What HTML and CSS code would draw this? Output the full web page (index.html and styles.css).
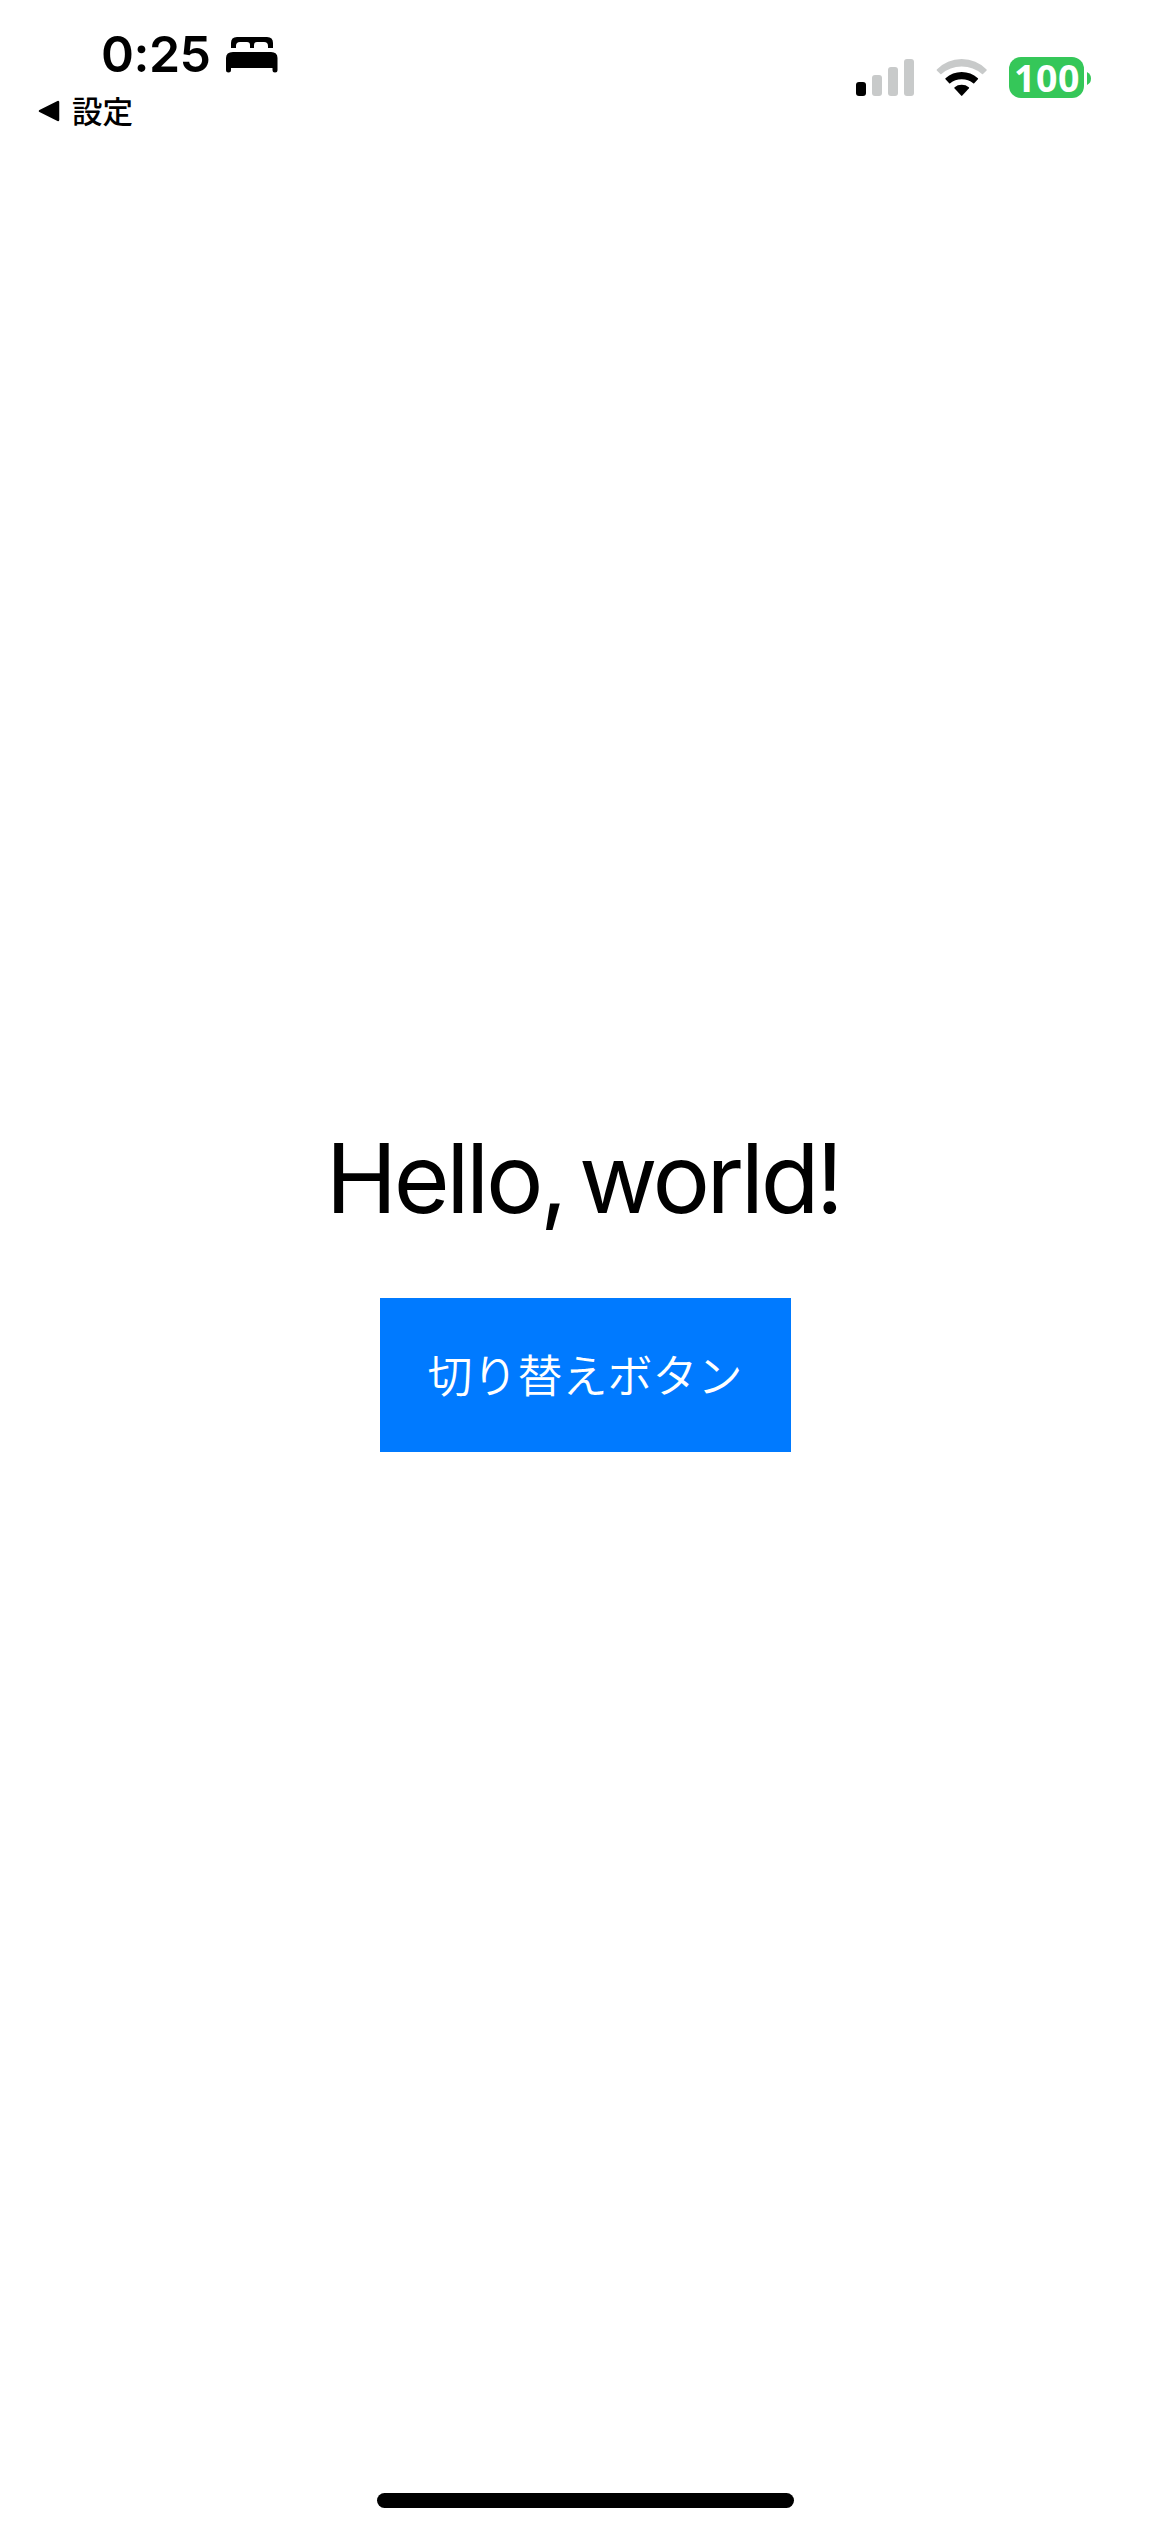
FILE: index.html
```html
<!DOCTYPE html>
<html lang="ja">
<head>
<meta charset="utf-8">
<title>Hello, world!</title>
<link rel="stylesheet" href="styles.css">
</head>
<body>
<header class="status">
  <div class="status-left">
    <div class="clock">
      <span class="time">0:25</span>
      <svg class="bed" width="52" height="36" viewBox="0 0 52 36"><path d="M5 11V6Q5 0 11 0H41Q47 0 47 6V11H42V9Q42 5 38 5H31Q28 5 28 8V11H24V8Q24 5 21 5H14Q10 5 10 9V11Z"/><path d="M0 33V21Q0 15 7 15H45Q51.500 15 51.500 21V33Q51.500 35.500 49 35.500T46.500 33V31H5V33Q5 35.500 2.500 35.500T0 33Z"/></svg>
    </div>
    <div class="back">
      <svg width="22" height="22" viewBox="0 0 22 22"><path d="M2 11 20 2V20Z" stroke="#000" stroke-width="2.500" stroke-linejoin="round"/></svg>
      <span class="back-label">設定</span>
    </div>
  </div>
  <div class="indicators">
    <svg width="58" height="42" viewBox="0 0 58 42"><rect y="25" width="10" height="14" rx="3"/><g fill="#c8caca"><rect x="16" y="18" width="10" height="21" rx="3"/><rect x="32" y="10" width="10" height="29" rx="3"/><rect x="48" y="2" width="10" height="37" rx="3"/></g></svg>
    <svg class="wifi" width="52" height="42" viewBox="0 0 52 42"><path fill="#c8caca" d="M.8 12.600Q11 2 25.700 2T50.600 12.600Q51 13 50.600 13.400L47 17Q46.500 17.500 46 17Q37.500 9.400 25.700 9.400T5.400 17Q4.900 17.500 4.400 17L.8 13.400Q.4 13 .8 12.600Z"/><path d="M9.500 21.200Q16.500 15 25.700 15T41.900 21.200Q42.400 21.700 41.900 22.200L38.200 26.200Q37.700 26.700 37.200 26.200Q32.500 22.300 25.700 22.300T14.200 26.200Q13.700 26.700 13.200 26.200L9.500 22.200Q9 21.700 9.500 21.200Z"/><path d="M18.600 30.200Q21.500 27.800 25.700 27.800T32.800 30.200Q33.400 30.700 32.800 31.400L26.300 38.600Q25.700 39.200 25.100 38.600L18.600 31.400Q18 30.700 18.600 30.200Z"/></svg>
    <div class="battery"><span class="charge">100</span></div>
    <svg class="tip" width="4" height="13" viewBox="0 0 4 13"><path fill="#35c759" d="M0 0Q4 2 4 6.500T0 13Z"/></svg>
  </div>
</header>
<main class="content">
  <h1 class="title">Hello, world!</h1>
  <button class="toggle">切り替えボタン</button>
</main>
<footer class="home"><div class="home-bar"></div></footer>
</body>
</html>
```
FILE: styles.css
```css
* { box-sizing: border-box; }
body {
  margin: 0;
  height: 2532px;
  display: flex;
  flex-direction: column;
  background: #fff;
  color: #000;
  font-family: Inter, "Noto Sans CJK JP", sans-serif;
}
svg { display: block; flex: none; }
.status {
  height: 141px;
  display: flex;
  justify-content: space-between;
  padding: 24px 79px 0 38px;
}
.clock {
  display: flex;
  align-items: center;
  height: 60px;
  padding-left: 63px;
}
.time {
  width: 125px;
  font-size: 50px;
  font-weight: 600;
  line-height: 60px;
  letter-spacing: -0.5px;
}
.bed { margin-top: 1px; }
.back {
  display: flex;
  align-items: center;
  gap: 12px;
  height: 54px;
}
.back-label {
  padding-bottom: 2px;
  font-family: "Noto Sans CJK JP", sans-serif;
  font-size: 30.5px;
  font-weight: 500;
  line-height: 40px;
}
.indicators {
  display: flex;
  align-items: center;
  height: 42px;
  margin-top: 33px;
}
.wifi { margin-left: 22px; }
.battery {
  width: 75px;
  height: 41px;
  margin: 0 0 1px 21px;
  padding-left: 1px;
  border-radius: 12px;
  background: #35c759;
  display: flex;
  align-items: center;
  justify-content: center;
}
.charge {
  color: #fff;
  font-family: "Noto Sans", sans-serif;
  font-size: 37.5px;
  font-weight: 700;
  line-height: 41px;
  letter-spacing: 0.5px;
}
.tip { margin-left: 3px; }
.content {
  flex: 1;
  display: flex;
  flex-direction: column;
  align-items: center;
  padding-top: 979px;
}
.title {
  margin: 0 4px 0 0;
  font-size: 96px;
  font-weight: 400;
  line-height: 116px;
  letter-spacing: -3.4px;
  word-spacing: -9px;
}
.toggle {
  width: 411px;
  height: 154px;
  margin: 62px 0 0 1px;
  padding: 0 1px 3px 0;
  border: 0;
  background: #007aff;
  color: #fff;
  font-family: "Noto Sans CJK JP", sans-serif;
  font-size: 45px;
  font-weight: 350;
  line-height: 60px;
}
.home {
  display: flex;
  justify-content: center;
  padding: 0 0 24px 1px;
}
.home-bar {
  width: 417px;
  height: 15px;
  border-radius: 8px;
  background: #000;
}
```
